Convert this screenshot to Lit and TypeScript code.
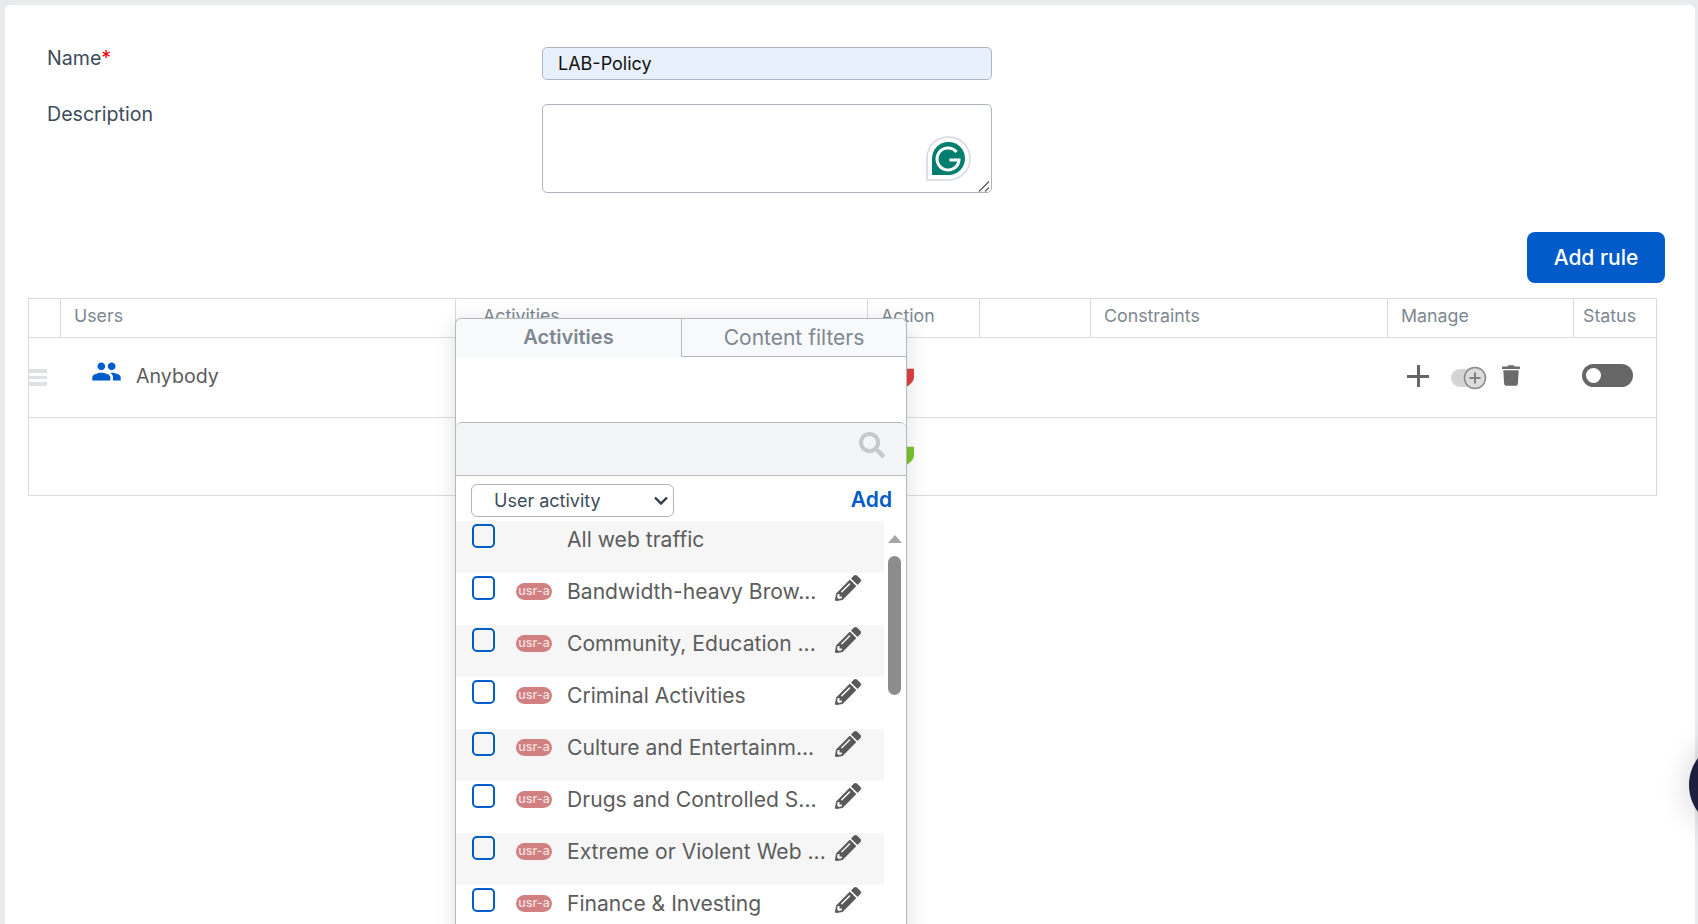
import { LitElement, html, css, svg } from "lit";
import { customElement } from "lit/decorators.js";

const pencil = html`<svg class="pencil" viewBox="0 0 512 512"><path d="M497.9 142.1l-46.1 46.1c-4.7 4.7-12.3 4.7-17 0l-111-111c-4.7-4.7-4.7-12.3 0-17l46.1-46.1c18.7-18.7 49.1-18.7 67.9 0l60.1 60.1c18.8 18.7 18.8 49.1 0 67.9zM284.2 99.8L21.6 362.4.4 483.9c-2.9 16.4 11.4 30.6 27.8 27.8l121.5-21.3 262.6-262.6c4.7-4.7 4.7-12.3 0-17l-111-111c-4.8-4.7-12.4-4.7-17.1 0zM124.1 339.9c-5.5-5.5-5.5-14.3 0-19.8l154-154c5.5-5.5 14.3-5.5 19.8 0s5.5 14.3 0 19.8l-154 154c-5.5 5.5-14.3 5.5-19.8 0zM88 424h48v36.3l-64.5 11.3-31.1-31.1L51.7 376H88v48z"/></svg>`;
const shield = svg`<path d="M0 0 H20 V10 C20 15 15 19 10 22 C5 19 0 15 0 10 Z"/>`;

const rows = [
  "All web traffic",
  "Bandwidth-heavy Brow...",
  "Community, Education ...",
  "Criminal Activities",
  "Culture and Entertainm...",
  "Drugs and Controlled S...",
  "Extreme or Violent Web ...",
  "Finance & Investing",
];

@customElement("app-root")
export class AppRoot extends LitElement {
  static styles = css`
    :host { display: block; position: relative; height: 924px; overflow: hidden; background: #e9eaec; padding: 5px 3px 0 5px; box-sizing: border-box; font-family: Inter, "Liberation Sans", sans-serif; color: #3d4b5a; }
    .card { background: #fff; border-radius: 5px 5px 0 0; height: 919px; padding: 42px 30px 0 0; box-sizing: border-box; }
    .form { display: grid; grid-template-columns: 537px 450px; row-gap: 24px; }
    .label { padding-left: 42px; font-size: 19.6px; line-height: 22px; }
    .label.desc { margin-top: -1px; }
    .req { color: #e00; }
    .input { box-sizing: border-box; width: 450px; height: 33px; border: 1px solid #aeb6bf; border-radius: 5px; background: #e8f0fe; font: 18px Inter, sans-serif; color: #111; padding: 0 15px; outline: none; }
    .area-wrap { position: relative; height: 89px; }
    .area { box-sizing: border-box; display: block; width: 450px; height: 89px; border: 1px solid #aeb6bf; border-radius: 5px; background: #fff; outline: none; resize: none; }
    .gram { position: absolute; left: 384px; top: 32px; width: 45px; height: 45px; }
    .grip { position: absolute; left: 436px; top: 77px; width: 12px; height: 11px; }
    .actions { display: flex; justify-content: flex-end; margin-top: 39px; }
    .add-rule { width: 138px; height: 51px; border: 0; border-radius: 8px; background: #015bc9; color: #fff; font: 500 21px Inter, sans-serif; }
    .table-wrap { position: relative; margin: 15px 8px 0 23px; }
    .table { box-sizing: border-box; border: 1px solid #d9dbde; height: 198px; }
    .row { display: grid; grid-template-columns: 32px 395px 412px 112px 111px 297px 186px 82px; border-bottom: 1px solid #d9dbde; box-sizing: border-box; }
    .row:last-child { border-bottom: 0; }
    .head { height: 39px; color: #7d8791; font-size: 17.8px; }
    .head > div { border-right: 1px solid #d9dbde; padding-left: 13px; line-height: 34px; box-sizing: border-box; }
    .head > div:last-child { border-right: 0; padding-left: 9px; }
    .head > .act { padding-left: 27px; }
    .r1 { height: 80px; }
    .r2 { height: 77px; }
    .handle { display: flex; flex-direction: column; gap: 3px; width: 18px; padding-top: 31px; }
    .handle i { display: block; height: 3.5px; background: #dfe1e4; }
    .user { display: flex; align-items: flex-start; padding: 25px 0 0 30px; color: #5c5c5c; font-size: 19.6px; line-height: 26px; }
    .user svg { width: 31px; height: 31px; fill: #015bc9; margin: -7px 14px 0 0; }
    .shield { display: block; width: 17px; height: 20px; margin: 30px 0 0 29px; }
    .shield.red { fill: #e04141; }
    .shield.green { fill: #7ac52a; margin-top: 28px; }
    .manage { display: flex; align-items: flex-start; padding: 27px 0 0 19px; }
    .plus { position: relative; width: 22px; height: 22px; margin-right: 22px; }
    .plus::before, .plus::after { content: ""; position: absolute; background: #666; }
    .plus::before { left: 0; right: 0; top: 10px; height: 3px; }
    .plus::after { top: 0; bottom: 0; left: 10px; width: 3px; }
    .tgl { width: 36px; height: 24px; margin: 1px 15px 0 0; }
    .trash { width: 18px; height: 21px; fill: #6b6b6b; }
    .status { padding: 26px 0 0 8px; }
    .switch { display: flex; align-items: center; box-sizing: border-box; width: 51px; height: 23px; border-radius: 12px; background: #666; padding-left: 4px; }
    .switch i { width: 15px; height: 15px; border-radius: 50%; background: #fff; }
    .pop { position: absolute; left: 427px; top: 20px; width: 452px; height: 640px; box-sizing: border-box; background: #fff; border: 1px solid #b1b8c0; border-bottom: 0; border-radius: 6px 6px 0 0; box-shadow: 0 4px 22px rgba(0,0,0,.13); }
    .tabs { display: flex; height: 38px; background: #f8f9fa; border-radius: 6px 6px 0 0; }
    .tab { flex: 1; text-align: center; font-size: 21px; line-height: 37px; color: #7d8791; }
    .tab.on { font-size: 20px; font-weight: 600; flex: 0 0 225px; }
    .tab.off { border-left: 1px solid #b1b8c0; border-bottom: 1px solid #b1b8c0; }
    .gap { height: 66px; }
    .search { display: flex; justify-content: flex-end; box-sizing: border-box; height: 54px; background: #f4f5f7; border: 1px solid #b1b8c0; border-width: 1px 0; border-radius: 6px 6px 0 0; padding: 9px 21px 0 0; margin-top: -1px; }
    .search svg { width: 26px; height: 26px; fill: #c8c8c8; }
    .tools { display: flex; align-items: flex-start; justify-content: space-between; height: 45px; padding: 8px 14px 0 15px; box-sizing: border-box; }
    .selbox { position: relative; width: 203px; height: 33px; }
    .sel { appearance: none; width: 203px; height: 33px; border: 1px solid #aeb6bf; border-radius: 6px; background: #fff; padding-left: 22px; font: 18px Inter, sans-serif; color: #3d4b5a; outline: none; }
    .chev { position: absolute; left: 183px; top: 12px; width: 14px; height: 9px; fill: none; stroke: #2d3b4a; stroke-width: 2.4; pointer-events: none; }
    .add { color: #015bc9; font-size: 21px; font-weight: 600; line-height: 32px; }
    .body { display: flex; }
    .list { width: 428px; }
    .item { display: flex; align-items: flex-start; height: 52px; box-sizing: border-box; padding: 4px 0 0 16px; color: #5c5c5c; font-size: 21.1px; line-height: 30px; }
    .item:nth-child(odd) { background: #f6f6f6; }
    .check { box-sizing: border-box; width: 23px; height: 24px; border: 2px solid #015bc9; border-radius: 5px; margin: -1px 21px 0 0; flex: none; }
    .badge { box-sizing: border-box; width: 36px; height: 17px; margin: 6px 15px 0 0; flex: none; border-radius: 9px; background: #d08080; color: #f5e0e0; font-size: 12.5px; font-weight: 500; line-height: 16px; text-align: center; white-space: nowrap; }
    .nobadge { width: 51px; flex: none; }
    .name { width: 268px; flex: none; white-space: nowrap; }
    .pencil { width: 26px; height: 26px; fill: #595959; flex: none; margin-top: -2px; }
    .rail { width: 21px; display: flex; flex-direction: column; align-items: center; padding: 14px 0 0 0; box-sizing: border-box; }
    .arrow { width: 0; height: 0; border: 7.5px solid transparent; border-top: 0; border-bottom: 8px solid #a6a6a6; margin-bottom: 13px; }
    .thumb { width: 13px; height: 139px; border-radius: 7px; background: #8c8c8c; }
    .chat { position: absolute; left: 1689px; top: 740px; width: 90px; height: 90px; border-radius: 50%; background: #1d1f3f; box-shadow: 0 0 30px rgba(0,0,0,.18); }
  `;

  render() {
    return html`
      <div class="card">
        <div class="form">
          <div class="label">Name<span class="req">*</span></div>
          <input class="input" .value=${"LAB-Policy"} />
          <div class="label desc">Description</div>
          <div class="area-wrap">
            <textarea class="area"></textarea>
            <svg class="gram" viewBox="0 0 45 45">
              <path d="M1 44 V22 C1 10 10 1 22.5 1 C34.5 1 44 10.5 44 22.5 C44 34.5 34.5 44 22.5 44 Z" fill="#fff" stroke="#d5d9e4" stroke-width="1.6"/>
              <path d="M6 39 V22.5 C6 13.4 13.4 6 22.5 6 C31.6 6 39 13.4 39 22.5 C39 31.6 31.6 39 22.5 39 Z" fill="#027e6f"/>
              <path d="M30.5 16 A11 11 0 1 0 33 24 H23.5" fill="none" stroke="#fff" stroke-width="3"/>
            </svg>
            <svg class="grip" viewBox="0 0 12 11"><path d="M1 10.5 L11 .5 M7 10.5 L11 6.5" stroke="#555" stroke-width="1.1" fill="none"/></svg>
          </div>
        </div>
        <div class="actions"><button class="add-rule">Add rule</button></div>
        <div class="table-wrap">
          <div class="table">
            <div class="row head">
              <div></div><div>Users</div><div class="act">Activities</div><div>Action</div><div></div><div>Constraints</div><div>Manage</div><div>Status</div>
            </div>
            <div class="row r1">
              <div class="handle"><i></i><i></i><i></i></div>
              <div class="user">
                <svg viewBox="0 0 24 24"><path d="M16 11c1.66 0 2.99-1.34 2.99-3S17.66 5 16 5c-1.66 0-3 1.34-3 3s1.34 3 3 3zm-8 0c1.66 0 2.99-1.34 2.99-3S9.66 5 8 5C6.34 5 5 6.34 5 8s1.34 3 3 3zm0 2c-2.33 0-7 1.17-7 3.5V19h14v-2.5c0-2.33-4.67-3.5-7-3.5zm8 0c-.29 0-.62.02-.97.05 1.16.84 1.97 1.97 1.97 3.45V19h6v-2.5c0-2.33-4.67-3.5-7-3.5z"/></svg>
                Anybody
              </div>
              <div></div>
              <div><svg class="shield red" viewBox="0 0 20 22">${shield}</svg></div>
              <div></div><div></div>
              <div class="manage">
                <div class="plus"></div>
                <svg class="tgl" viewBox="0 0 36 24">
                  <rect x="0" y="3" width="26" height="18" rx="9" fill="#d4d4d4"/>
                  <circle cx="24" cy="12" r="10.5" fill="#dcdcdc" stroke="#8a8a8a" stroke-width="1.5"/>
                  <path d="M24 6.5 V17.5 M18.5 12 H29.5" stroke="#808080" stroke-width="2"/>
                </svg>
                <svg class="trash" viewBox="0 0 448 512"><path d="M432 32H312l-9.4-18.7A24 24 0 0 0 281.1 0H166.8a23.72 23.72 0 0 0-21.4 13.3L136 32H16A16 16 0 0 0 0 48v32a16 16 0 0 0 16 16h416a16 16 0 0 0 16-16V48a16 16 0 0 0-16-16zM53.2 467a48 48 0 0 0 47.9 45h245.8a48 48 0 0 0 47.9-45L416 128H32z"/></svg>
              </div>
              <div class="status"><div class="switch"><i></i></div></div>
            </div>
            <div class="row r2">
              <div></div><div></div><div></div>
              <div><svg class="shield green" viewBox="0 0 20 22">${shield}</svg></div>
              <div></div><div></div><div></div><div></div>
            </div>
          </div>
          <div class="pop">
            <div class="tabs">
              <div class="tab on">Activities</div>
              <div class="tab off">Content filters</div>
            </div>
            <div class="gap"></div>
            <div class="search">
              <svg viewBox="0 0 512 512"><path d="M505 442.7L405.3 343c-4.5-4.5-10.6-7-17-7H372c27.6-35.3 44-79.7 44-128C416 93.1 322.9 0 208 0S0 93.1 0 208s93.1 208 208 208c48.3 0 92.7-16.4 128-44v16.3c0 6.4 2.5 12.5 7 17l99.7 99.7c9.4 9.4 24.6 9.4 33.9 0l28.3-28.3c9.4-9.4 9.4-24.6.1-34zM208 336c-70.7 0-128-57.2-128-128 0-70.7 57.2-128 128-128 70.7 0 128 57.2 128 128 0 70.7-57.2 128-128 128z"/></svg>
            </div>
            <div class="tools">
              <div class="selbox">
                <select class="sel"><option>User activity</option></select>
                <svg class="chev" viewBox="0 0 14 9"><path d="M1 1.5 L7 7.5 L13 1.5"/></svg>
              </div>
              <div class="add">Add</div>
            </div>
            <div class="body">
              <div class="list">
                ${rows.map((r, i) => html`
                  <div class="item">
                    <div class="check"></div>
                    ${i === 0 ? html`<div class="nobadge"></div>` : html`<div class="badge">usr-a</div>`}
                    <div class="name">${r}</div>
                    ${i === 0 ? "" : pencil}
                  </div>`)}
              </div>
              <div class="rail"><div class="arrow"></div><div class="thumb"></div></div>
            </div>
          </div>
        </div>
      </div>
      <div class="chat"></div>
    `;
  }
}
